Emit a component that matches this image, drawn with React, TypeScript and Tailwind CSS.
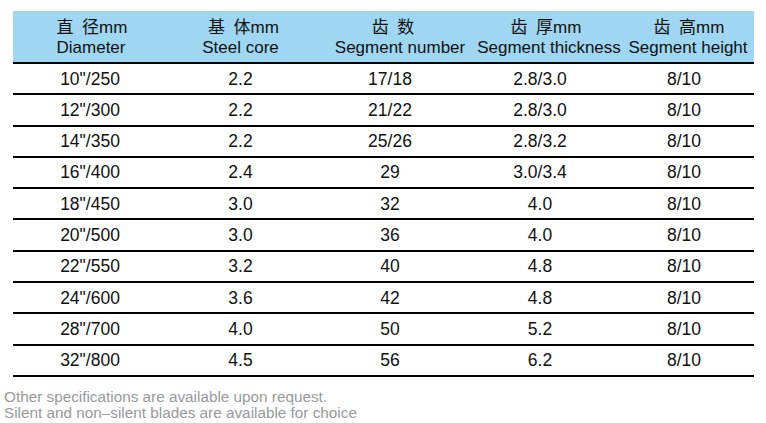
import React from "react";

const rows = [
  ['10"/250', "2.2", "17/18", "2.8/3.0", "8/10"],
  ['12"/300', "2.2", "21/22", "2.8/3.0", "8/10"],
  ['14"/350', "2.2", "25/26", "2.8/3.2", "8/10"],
  ['16"/400', "2.4", "29", "3.0/3.4", "8/10"],
  ['18"/450', "3.0", "32", "4.0", "8/10"],
  ['20"/500', "3.0", "36", "4.0", "8/10"],
  ['22"/550', "3.2", "40", "4.8", "8/10"],
  ['24"/600', "3.6", "42", "4.8", "8/10"],
  ['28"/700', "4.0", "50", "5.2", "8/10"],
  ['32"/800', "4.5", "56", "6.2", "8/10"],
];

const grid = "grid grid-cols-[154px_147px_152px_148px_140px]";

export default function App() {
  return (
    <div
      className="w-[766px] h-[423px] bg-white overflow-hidden"
      style={{ fontFamily: '"Liberation Sans", Arial, "Noto Sans CJK SC", sans-serif' }}
    >
      <div className="ml-[13px] mt-[11px] w-[741px]">
        <div className={`${grid} bg-[#9fd7f2] border-b-2 border-black h-[53px] pt-[7px] text-[17px] leading-[20px] text-[#111]`}>
          <div className="flex flex-col">
            <div className="flex justify-center whitespace-pre pl-[4px]">直{"\u2002"}径mm</div>
            <div className="flex justify-center whitespace-nowrap pl-[2px]">Diameter</div>
          </div>
          <div className="flex flex-col">
            <div className="flex justify-center whitespace-pre pl-[6px]">基{"\u2002"}体mm</div>
            <div className="flex justify-center whitespace-nowrap">Steel core</div>
          </div>
          <div className="flex flex-col">
            <div className="flex justify-center whitespace-pre pl-[6px]">齿{"\u2002"}数</div>
            <div className="flex justify-center whitespace-nowrap pl-[20px]">Segment number</div>
          </div>
          <div className="flex flex-col">
            <div className="flex justify-center whitespace-pre pl-[12px]">齿{"\u2002"}厚mm</div>
            <div className="flex justify-center whitespace-nowrap pl-[18px]">Segment thickness</div>
          </div>
          <div className="flex flex-col">
            <div className="flex justify-center whitespace-pre pl-[10px]">齿{"\u2002"}高mm</div>
            <div className="flex justify-center whitespace-nowrap pl-[8px]">Segment height</div>
          </div>
        </div>
        {rows.map((r, i) => (
          <div
            key={i}
            className={`${grid} h-[31.3px] border-b-2 border-black items-center text-[17.5px] text-[#111]`}
          >
            {r.map((c, j) => (
              <div key={j} className="flex justify-center whitespace-nowrap">
                {c}
              </div>
            ))}
          </div>
        ))}
      </div>
      <div className="ml-[4px] mt-[12px] text-[15.3px] leading-[16px] text-[#999999]">
        <div>Other specifications are available upon request.</div>
        <div>Silent and non–silent blades are available for choice</div>
      </div>
    </div>
  );
}
